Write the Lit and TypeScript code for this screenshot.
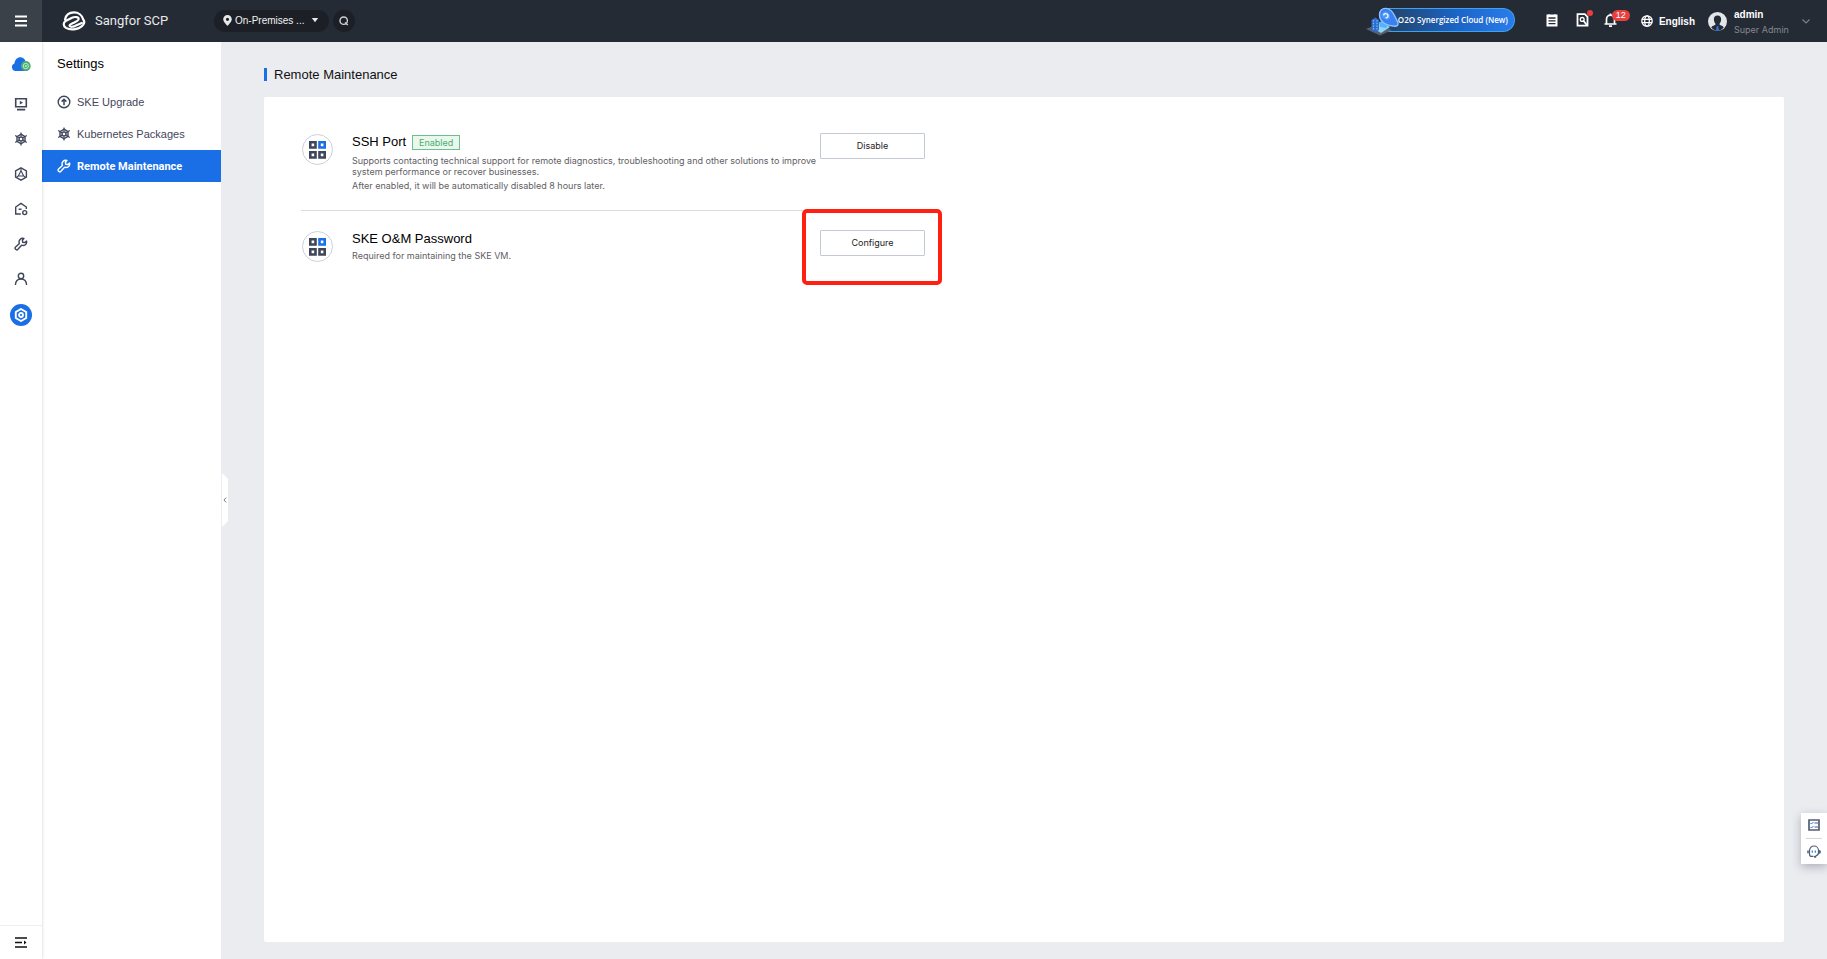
import { LitElement, html, css, svg } from "lit";
import { customElement } from "lit/decorators.js";

const stroke = (body: unknown, size = 14, cls = "") =>
  html`<svg class=${cls} width=${size} height=${size} viewBox="0 0 14 14" fill="none" stroke="currentColor" stroke-width="1.4" aria-hidden="true">${body}</svg>`;

const wheel = svg`<path d="M7 2.2 11 4.6V9.4L7 11.8 3 9.4V4.6Z"/><path d="M7 .5V4.6M7 9.4v4.1M1.2 3.6 4.9 5.8M9.1 8.2l3.7 2.2M12.8 3.6 9.1 5.8M4.9 8.2 1.2 10.4" stroke-width="1.2"/><circle cx="7" cy="7" r="2"/>`;
const wrench = svg`<path d="M12.6 4.1a3.6 3.6 0 0 1-5 4.1L3.9 12.3a1.5 1.5 0 0 1-2.3-2.2L5.4 6.4a3.6 3.6 0 0 1 4.5-4.9L8.4 3.2l.3 2 2 .4Z" stroke-linejoin="round"/>`;
const upload = svg`<circle cx="7" cy="7" r="5.8"/><path d="M7 10.2V4.4M4.6 6.6 7 4.2l2.4 2.4" stroke-width="1.5"/>`;
const monitor = svg`<path d="M1.7 1.700h10.600v8H1.700ZM3 12.6h8.200" stroke-width="1.600"/><path d="M5.800 3.800v3.800L9 5.700Z" fill="currentColor" stroke="none"/>`;
const hexA = svg`<path d="M7 .9 12.4 3.8v6.4L7 13.1 1.6 10.2V3.8Z"/><path d="M7 3.8 4.3 9h5.4ZM2.6 10.2 4.3 9M11.4 10.2 9.7 9M7 1.2v2.6" stroke-width="1.1"/>`;
const house = svg`<path d="M6.8 12H1.7V5L7 1.4 12.3 5v2"/><path d="M4.6 7.2h3"/><circle cx="10.7" cy="10.6" r="2"/>`;
const person = svg`<circle cx="7" cy="4" r="2.7"/><path d="M1.4 13c.2-4 2.4-6 5.6-6s5.400 2 5.600 6"/>`;
const blocks = html`<svg width="17" height="18" viewBox="0 0 17 18" fill="none" stroke="#3f465a" stroke-width="2.600" aria-hidden="true"><path d="M1.300 1.300h5.200v5.200H1.300zM1.300 11.300h5.200v5.200H1.300zM10.500 11.300h5.200v5.200h-5.200z"/><path stroke="#1a6fe6" d="M10.500 1.300h5.200v5.200h-5.200z"/></svg>`;

@customElement("app-topbar")
class AppTopbar extends LitElement {
  static styles = css`
    :host { display: flex; height: 42px; flex: none; align-items: center; background: #252b35; color: #fff; font: 10px "Liberation Sans", Arial, sans-serif; }
    button { border: 0; background: none; color: inherit; padding: 0; font: inherit; display: flex; align-items: center; justify-content: center; cursor: pointer; }
    .menu { width: 42px; height: 42px; background: #3a4149; }
    .brand { display: flex; align-items: center; gap: 8px; padding-left: 20px; width: 152px; font: 13px/14px Roboto, sans-serif; color: #e9eaec; }
    .brand span { padding-bottom: 1px; }
    .region { display: flex; align-items: center; position: relative; width: 115px; height: 22px; border-radius: 11px; background: #1c2026; }
    .region .pin { position: absolute; left: 9px; top: 5px; pointer-events: none; }
    .region .caret { position: absolute; right: 10px; top: 8px; pointer-events: none; }
    select { appearance: none; width: 100%; height: 22px; border: 0; padding: 0 20px 1px 21px; background: none; color: #f0f1f2; font: 10px "Liberation Sans", Arial, sans-serif; }
    option { color: #222; }
    .search { width: 22px; height: 22px; margin-left: 4px; border-radius: 11px; background: #1c2026; color: #cfd1d4; }
    .right { display: flex; align-items: center; margin-left: auto; padding-right: 17px; }
    .promo { position: relative; height: 24px; width: 132px; margin: 0 30px 2px 0; justify-content: flex-end; padding-right: 6px; border: 1px solid #3aa4f2; border-left: 0; border-radius: 0 12px 12px 0; background: linear-gradient(90deg, #24405f, #1c63c4 55%, #2a7cec); font: 600 8px "Open Sans", sans-serif; white-space: nowrap; box-sizing: border-box; }
    .promo svg { position: absolute; left: -17px; top: -5px; }
    .promo span { position: relative; padding-bottom: 1px; }
    .tool { position: relative; width: 14px; height: 16px; margin-bottom: 2px; }
    .tool + .tool { margin-left: 17px; }
    .tool + .bell { margin-left: 14px; }
    .dot { position: absolute; right: -3px; top: -2px; width: 6px; height: 6px; border-radius: 3px; background: #e8403f; }
    .count { position: absolute; left: 8px; top: -2px; width: 18px; height: 11px; border-radius: 6px; background: #e8403f; font: 9px/11px "Liberation Sans", Arial, sans-serif; text-align: center; }
    .lang { gap: 6px; margin-left: 23px; font-weight: bold; }
    .user { gap: 7px; margin-left: 13px; }
    .who { display: flex; flex-direction: column; text-align: left; gap: 3px; line-height: 12px; padding-top: 2px; width: 61px; }
    .who b { font-weight: bold; }
    .role { color: #84888e; font-size: 9px; font-family: Inter, sans-serif; white-space: nowrap; }
  `;
  render() {
    return html`
      <button class="menu" aria-label="Menu"><svg width="12" height="12" viewBox="0 0 12 12" stroke="#fff" stroke-width="2"><path d="M0 1.500h12M0 6h12M0 10.500h12"/></svg></button>
      <div class="brand">
        <svg width="25" height="20" viewBox="0 0 25 20" fill="none" stroke="#fff" stroke-width="2.200" stroke-linecap="round">
          <path d="M3 8.500C4 4 7.500 1.400 12 1.400s8 2.800 9 6.600c2 2.600 1.300 5-.6 6.700-4.500 4.300-12.400 4.600-16.400 2.200C.8 14.700 1.200 11.700 3.600 10l6.400-3.300c2.700-1.200 6.900-.9 6.600 1.500-.3 1.900-3.600 3-5.600 3.900-1.700.8-3.700 1.400-3.500 2.700.4 1.500 3.500 1 5.300.3l7-3.200"/>
        </svg>
        <span>Sangfor SCP</span>
      </div>
      <label class="region">
        <svg class="pin" width="9" height="11" viewBox="0 0 9 11"><path fill="#e6e7e9" fill-rule="evenodd" d="M4.500 0A4.300 4.300 0 0 0 .2 4.300C.2 7 4.500 11 4.500 11S8.800 7 8.800 4.300A4.300 4.300 0 0 0 4.500 0Zm0 2.700a1.600 1.600 0 1 1 0 3.200 1.600 1.600 0 0 1 0-3.200Z"/></svg>
        <select aria-label="Resource pool"><option>On-Premises ...</option></select>
        <svg class="caret" width="8" height="5" viewBox="0 0 8 5"><path fill="#e6e7e9" d="M.800 0h6.400L4 4.200Z"/></svg>
      </label>
      <button class="search" aria-label="Search"><svg width="10" height="10" viewBox="0 0 10 10" fill="none" stroke="currentColor" stroke-width="1.400"><circle cx="4.700" cy="4.700" r="3.700"/><path d="M6 6.500 8.800 9"/></svg></button>
      <div class="right">
        <button class="promo">
          <svg width="34" height="34" viewBox="0 0 34 34">
            <path d="M0 25 12 20l14 6-12 5.500Z" fill="#56616f"/>
            <path d="M7 24 15 18l9 5-9 6Z" fill="#8fd3fb"/>
            <path d="m13 18 5-1.500 5 3.500-3 4-6-1Z" fill="#54b4fb"/>
            <path d="m5.500 16 3.800-2.500 3.700 2.500v10l-3.700 2-3.800-2Z" fill="#2b6dd0"/>
            <path d="M7.500 16v10.500M11 16v10.500" stroke="#7fb6f5" stroke-width="1.200" stroke-dasharray="1.500 1.200"/>
            <path d="M13.500 11c0-4.500 3-7 6.500-6.600 4.200.4 6.500 3 8.500 7.100l3.200 6.500c1.200 2.800-.5 4.500-3.200 4.300-3.500-.2-7-1-9.800-2.800-3.300-2.100-5.200-5-5.200-8.500Z" fill="#3a80f0" stroke="#8cc2ff" stroke-width="1.400"/>
            <path d="M15.500 11.300c.3-2.800 2.200-4.200 4.700-3.700 2.500.6 4 2.900 4 5.200-.1 2.200-1.700 3.300-3.800 2.900-2.800-.5-4.900-2.200-4.900-4.400Z" fill="#4f95fb"/>
            <path d="M17.600 11.300c.2-1.400 1.300-2.100 2.500-1.700 1.300.4 2.100 1.800 1.800 3-.3 1.100-1.400 1.300-2.300.9" fill="none" stroke="#e6f3ff" stroke-width="1.500"/>
          </svg>
          <span>O2O Synergized Cloud (New)</span>
        </button>
        <button class="tool" aria-label="Tasks"><svg width="12" height="13" viewBox="0 0 12 13"><path fill="#fff" d="M.500.500h2V0h1v.500h5V0h1v.500h2V12.500H.500Z"/><path d="M2.500 4h7M2.500 6.800h7M2.500 9.600h7" stroke="#252b35" stroke-width="1.300"/></svg></button>
        <button class="tool" aria-label="Diagnostics"><svg width="13" height="14" viewBox="0 0 13 14" fill="none"><path d="M1.500 1.200h7.300l2.700 2.600v8.800h-10Z" stroke="#fff" stroke-width="1.800"/><path d="M7 7.300 10.800 12" stroke="#fff" stroke-width="1.800"/><circle cx="6.200" cy="6.400" r="1.900" stroke="#fff" stroke-width="1.300"/></svg><span class="dot"></span></button>
        <button class="tool bell" aria-label="Alerts, 12 new"><svg width="13" height="14" viewBox="0 0 13 14" fill="none" stroke="#fff" stroke-width="1.700"><path d="M.500 11h12M2.500 11V6.200a4 4 0 0 1 8 0V11M6.500 2.500V.500M5 13.200h3"/></svg><span class="count">12</span></button>
        <button class="lang"><svg width="12" height="12" viewBox="0 0 12 12" fill="none" stroke="#fff" stroke-width="1.300"><circle cx="6" cy="6" r="5.200"/><ellipse cx="6" cy="6" rx="2.300" ry="5.200"/><path d="M.8 4.300h10.400M.8 7.700h10.400"/></svg>English</button>
        <button class="user">
          <svg width="19" height="19" viewBox="0 0 19 19"><circle cx="9.500" cy="9.500" r="9.500" fill="#e4e7ea"/><path fill="#252b35" d="M9.500 3.500c2.700 0 3.800 1.700 3.600 4.200-.1 1.900-.8 3.100-1.500 3.800v1.300l3.200 1.400c.5.300.9.900.9 1.600A9.400 9.400 0 0 1 9.500 19a9.400 9.400 0 0 1-6.200-3.200c0-.7.4-1.300.9-1.600l3.200-1.400v-1.300c-.7-.7-1.400-1.900-1.500-3.800-.2-2.500.9-4.200 3.600-4.200Z"/><path fill="#2a74e6" d="M8.800 14h1.400l.9 4.500-1.600.5-1.600-.5Z"/></svg>
          <span class="who"><b>admin</b><span class="role">Super Admin</span></span>
          <svg width="8" height="5" viewBox="0 0 8 5" fill="none" stroke="#7b7f86" stroke-width="1.200"><path d="M.5.500 4 4 7.500.500"/></svg>
        </button>
      </div>`;
  }
}

@customElement("app-rail")
class AppRail extends LitElement {
  static styles = css`
    :host { display: flex; flex-direction: column; width: 42px; flex: none; background: #fff; color: #3f465a; box-shadow: 0 0 3px rgba(0, 0, 0, 0.2); z-index: 1; }
    nav { display: flex; flex-direction: column; align-items: center; padding-top: 4px; }
    a, button { display: flex; align-items: center; justify-content: center; width: 42px; height: 35px; color: inherit; }
    .home { margin-bottom: 5px; }
    .on { width: 22px; height: 22px; margin-top: 8px; border-radius: 11px; background: #1a6fe6; color: #fff; }
    button { margin-top: auto; height: 34px; border: 0; border-top: 1px solid #eee; background: none; padding: 0; color: #111; }
  `;
  render() {
    return html`
      <nav aria-label="Modules">
        <a class="home" href="#" aria-label="Cloud"><svg width="20" height="14" viewBox="0 0 20 14"><path fill="#1a6fe6" d="M4 14a4 4 0 0 1-.6-7.600C4 2.500 6.500.300 9.200.300c2.800 0 4.800 1.700 5.400 4.200A5 5 0 0 1 16 14Z"/><circle cx="14.800" cy="9" r="4.900" fill="#4fae73"/><circle cx="14.800" cy="9" r="2.600" fill="none" stroke="#c4ead0"/><circle cx="14.800" cy="9" r="1" fill="#c4ead0"/></svg></a>
        ${[["Compute", monitor], ["Kubernetes", wheel], ["Applications", hexA], ["Resources", house], ["Maintenance", wrench], ["Users", person]].map(
          ([name, icon]) => html`<a href="#" aria-label=${name as string}>${stroke(icon)}</a>`
        )}
        <a class="on" href="#" aria-label="SKE"><svg width="14" height="14" viewBox="0 0 14 14" fill="none" stroke="currentColor"><path d="M7 1 12.200 4v6L7 13 1.800 10V4Z" stroke-width="1.900"/><circle cx="7" cy="7" r="2" stroke-width="1.800"/></svg></a>
      </nav>
      <button aria-label="Expand menu"><svg width="12" height="11" viewBox="0 0 12 11" stroke="#111" stroke-width="1.600"><path d="M0 1h12M0 5.500h7M0 10h12"/><path d="M9 3.500v4l2.500-2Z" fill="#111" stroke="none"/></svg></button>`;
  }
}

@customElement("maintenance-row")
class MaintenanceRow extends LitElement {
  static properties = { heading: {}, status: {}, lines: { attribute: false }, action: {}, marked: { type: Boolean } };
  declare heading: string;
  declare status: string;
  declare lines: string[];
  declare action: string;
  declare marked: boolean;
  static styles = css`
    :host { display: flex; align-items: flex-start; font-family: "Liberation Sans", Arial, sans-serif; }
    .icon { display: flex; align-items: center; justify-content: center; width: 31px; height: 31px; box-sizing: border-box; border: 1px solid #cdd0da; border-radius: 50%; margin: 1px 19px 0 0; flex: none; }
    .text { flex: 0 1 468px; }
    h2 { display: flex; align-items: flex-start; gap: 6px; min-height: 18px; margin: 0 0 2px; font-size: 13px; line-height: 18px; font-weight: normal; color: #000; white-space: nowrap; }
    .tag { box-sizing: border-box; width: 48px; height: 15px; border: 1px solid #6cc08b; background: #e9f7ee; color: #4cad6f; font: 9px/13px Inter, sans-serif; text-align: center; margin: 2px 0 3px; }
    p { margin: 0 0 3px; font: 9px/11px Inter, sans-serif; color: #5f6064; }
    .act { position: relative; flex: none; }
    button { display: block; width: 105px; height: 26px; border: 1px solid #c5c9d6; border-radius: 1px; background: #fff; color: #222; font: 9px Inter, sans-serif; padding: 0 0 2px; }
    .mark { position: absolute; inset: -21px -17px -29px -18px; border: 4px solid #ff2012; border-radius: 5px; background: #fff; }
    .mark + button { position: relative; }
  `;
  render() {
    return html`
      <span class="icon">${blocks}</span>
      <div class="text">
        <h2>${this.heading}${this.status ? html`<span class="tag">${this.status}</span>` : ""}</h2>
        ${this.lines.map((l) => html`<p>${l}</p>`)}
      </div>
      <div class="act">${this.marked ? html`<span class="mark"></span>` : ""}<button>${this.action}</button></div>`;
  }
}

@customElement("app-root")
class AppRoot extends LitElement {
  static styles = css`
    :host { display: flex; flex-direction: column; min-height: 100vh; background: #ebecf0; font: 11px "Liberation Sans", Arial, sans-serif; }
    .body { display: flex; flex: 1; }
    .side { position: relative; width: 179px; flex: none; background: #fff; }
    .side h2 { margin: 0; padding: 0 15px; font: 13px/44px "Liberation Sans", Arial, sans-serif; color: #000; }
    .item { display: flex; align-items: center; gap: 6px; height: 32px; padding: 0 15px; color: #3f465a; text-decoration: none; white-space: nowrap; }
    .item.on { background: #1a6fe6; color: #fff; font: bold 11px Roboto, sans-serif; }
    .item svg { flex: none; }
    .fold { position: absolute; left: 180px; top: 431px; width: 6px; height: 54px; padding: 0; border: 0; background: #fff; clip-path: polygon(0 0, 100% 6px, 100% 48px, 0 100%); display: flex; align-items: center; justify-content: center; }
    main { flex: 1; display: flex; flex-direction: column; padding: 0 43px 17px; }
    h1 { display: flex; align-items: center; gap: 7px; height: 20px; margin: 22px 0 13px; font: 13px "Liberation Sans", Arial, sans-serif; color: #111; }
    h1::before { content: ""; width: 3px; height: 13px; background: #1a6fe6; }
    .card { flex: 1; background: #fff; border-radius: 2px; padding: 36px 37px; }
    maintenance-row { padding-left: 1px; }
    hr { width: 510px; height: 1px; margin: 16px 0 19px; border: 0; background: #d9dbdd; }
    .float { position: fixed; right: 0; bottom: 95px; width: 26px; height: 51px; background: #fff; box-shadow: 0 3px 10px rgba(60, 65, 85, 0.35); display: flex; flex-direction: column; align-items: center; justify-content: space-evenly; color: #555d73; }
    .float button { border: 0; padding: 0; background: none; color: inherit; display: flex; }
    .float i { width: 16px; height: 1px; background: #d5d7db; }
  `;
  render() {
    return html`
      <app-topbar></app-topbar>
      <div class="body">
        <app-rail></app-rail>
        <aside class="side">
          <h2>Settings</h2>
          <a class="item" href="#">${stroke(upload)}SKE Upgrade</a>
          <a class="item" href="#">${stroke(wheel)}Kubernetes Packages</a>
          <a class="item on" href="#" aria-current="page">${stroke(wrench)}Remote Maintenance</a>
          <button class="fold" aria-label="Collapse"><svg width="4" height="6" viewBox="0 0 4 6" fill="none" stroke="#777d8c"><path d="M3.200.600.900 3l2.300 2.400"/></svg></button>
        </aside>
        <main>
          <h1>Remote Maintenance</h1>
          <section class="card">
            <maintenance-row heading="SSH Port" status="Enabled" action="Disable"
              .lines=${["Supports contacting technical support for remote diagnostics, troubleshooting and other solutions to improve system performance or recover businesses.", "After enabled, it will be automatically disabled 8 hours later."]}></maintenance-row>
            <hr />
            <maintenance-row heading="SKE O&M Password" action="Configure" marked .lines=${["Required for maintaining the SKE VM."]}></maintenance-row>
          </section>
        </main>
      </div>
      <div class="float">
        <button aria-label="Task list"><svg width="12" height="12" viewBox="0 0 12 12" fill="none" stroke="currentColor"><path d="M1 1h10v10H1Z" stroke-width="1.700"/><path d="M6.500 4H10M6.500 8H10" stroke-width="1.200"/><path d="m2.500 4 1 1L5.500 3M2.500 8l1 1 2-2" stroke="#1a84f0"/></svg></button>
        <i></i>
        <button aria-label="Support"><svg width="14" height="13" viewBox="0 0 14 13" fill="none" stroke="currentColor" stroke-width="1.200"><path d="M2.500 5.500a4.500 4.500 0 0 1 9 0M2.500 5v4.200c0 1.500.8 2.200 2.300 2.200h1.700M11.500 5v2.500c0 1.500-1 3-3 3.500"/><path d="M1 5.500v2.800M13 5.500v2.800M12 5v3.800" stroke-width="1.500"/><path d="M7 11.800h2.200" stroke-width="1.800"/><path d="M5.300 5.500v2.300M8.300 5.500v2.300" stroke="#1a84f0"/></svg></button>
      </div>`;
  }
}
